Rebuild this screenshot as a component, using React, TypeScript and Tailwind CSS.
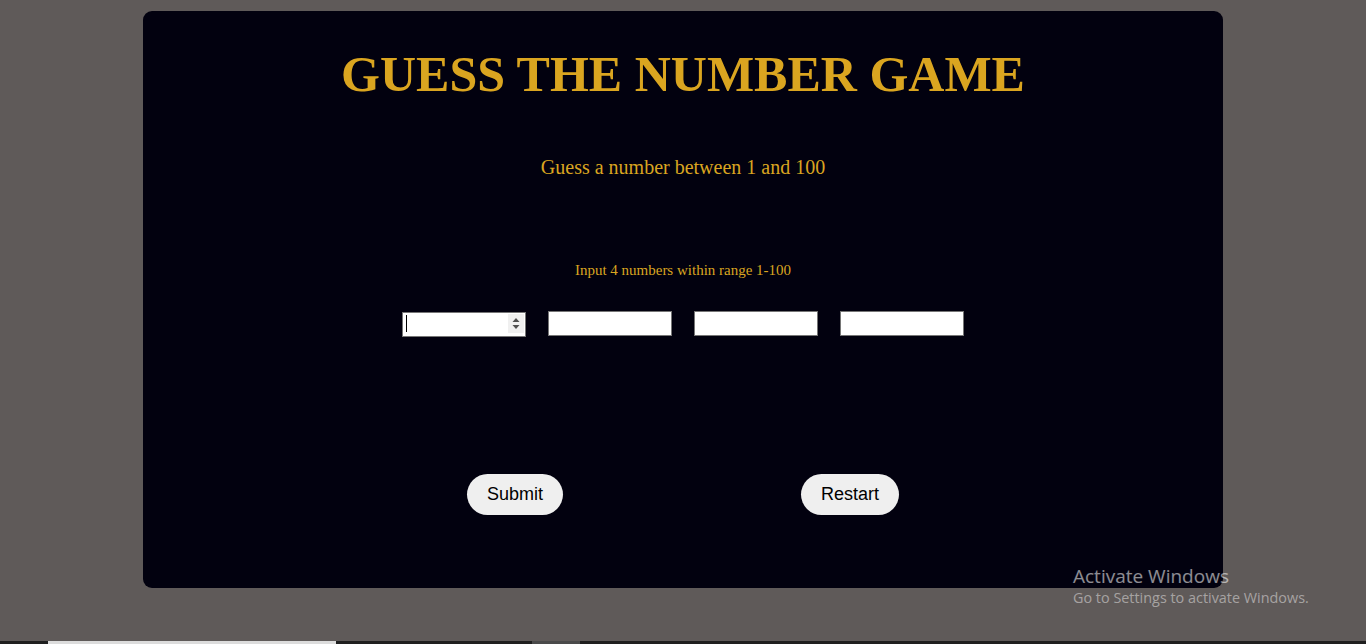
import React from "react";

const serif = { fontFamily: '"Liberation Serif", "Times New Roman", serif' };

// Small up/down arrows that Chrome shows on a focused number input
const Spinner = () => (
  <div className="absolute right-[2px] top-[3px] w-[16px] h-[19px] bg-[#f0f0f0] flex items-center justify-center">
    <svg width="8" height="13" viewBox="0 0 8 13">
      <path d="M4 1 L7.5 5 L0.5 5 Z" fill="#505050" />
      <path d="M4 12 L7.5 8 L0.5 8 Z" fill="#505050" />
    </svg>
  </div>
);

export default function App() {
  return (
    <div className="relative h-[644px] w-full overflow-hidden bg-[#5f5a59] flex flex-col">
      <div className="flex-1">
        <div className="mx-auto mt-[11px] w-[1080px] h-[577px] rounded-[9px] bg-[#02010f] flex flex-col items-center pt-[38px]">
          {/* Title */}
          <h1
            className="text-[50px] leading-[50px] font-bold text-[#daa520] tracking-normal"
            style={serif}
          >
            GUESS THE NUMBER GAME
          </h1>

          <p
            className="mt-[58px] text-[20px] leading-[20px] text-[#daa520]"
            style={serif}
          >
            Guess a number between 1 and 100
          </p>

          <p
            className="mt-[86px] text-[15px] leading-[15px] text-[#daa520]"
            style={serif}
          >
            Input 4 numbers within range 1-100
          </p>

          {/* Guess inputs */}
          <div className="mt-[33px] flex gap-[22px]">
            <div className="relative w-[124px] h-[25px]">
              <input
                type="number"
                className="w-full h-full bg-white border border-[#767676] outline-none px-[2px] text-[13px]"
              />
              <span className="absolute left-[4px] top-[4px] w-[1px] h-[17px] bg-black" />
              <Spinner />
            </div>
            <input
              type="number"
              className="w-[124px] h-[25px] bg-white border border-[#767676] outline-none px-[2px] text-[13px]"
            />
            <input
              type="number"
              className="w-[124px] h-[25px] bg-white border border-[#767676] outline-none px-[2px] text-[13px]"
            />
            <input
              type="number"
              className="w-[124px] h-[25px] bg-white border border-[#767676] outline-none px-[2px] text-[13px]"
            />
          </div>

          {/* Actions */}
          <div
            className="mt-[138px] flex gap-[238px]"
            style={{ fontFamily: '"Liberation Sans", Arial, sans-serif' }}
          >
            <button className="h-[41px] px-5 rounded-full bg-[#efefef] text-[18px] text-black">
              Submit
            </button>
            <button className="h-[41px] px-5 rounded-full bg-[#efefef] text-[18px] text-black">
              Restart
            </button>
          </div>
        </div>
      </div>

      {/* taskbar edge */}
      <div className="h-[3px] bg-[#1f1f1f] flex">
        <div className="ml-[48px] w-[288px] bg-[#dcdcdc]" />
        <div className="ml-[196px] w-[48px] bg-[#4a4a4a]" />
      </div>

      {/* Windows activation watermark */}
      <div
        className="absolute left-[1073px] top-[564px] pointer-events-none"
        style={{ fontFamily: '"Open Sans", "Noto Sans", sans-serif' }}
      >
        <div className="text-[19px] leading-[24px] text-white/55">Activate Windows</div>
        <div className="text-[14.4px] leading-[20px] text-white/45">
          Go to Settings to activate Windows.
        </div>
      </div>
    </div>
  );
}
